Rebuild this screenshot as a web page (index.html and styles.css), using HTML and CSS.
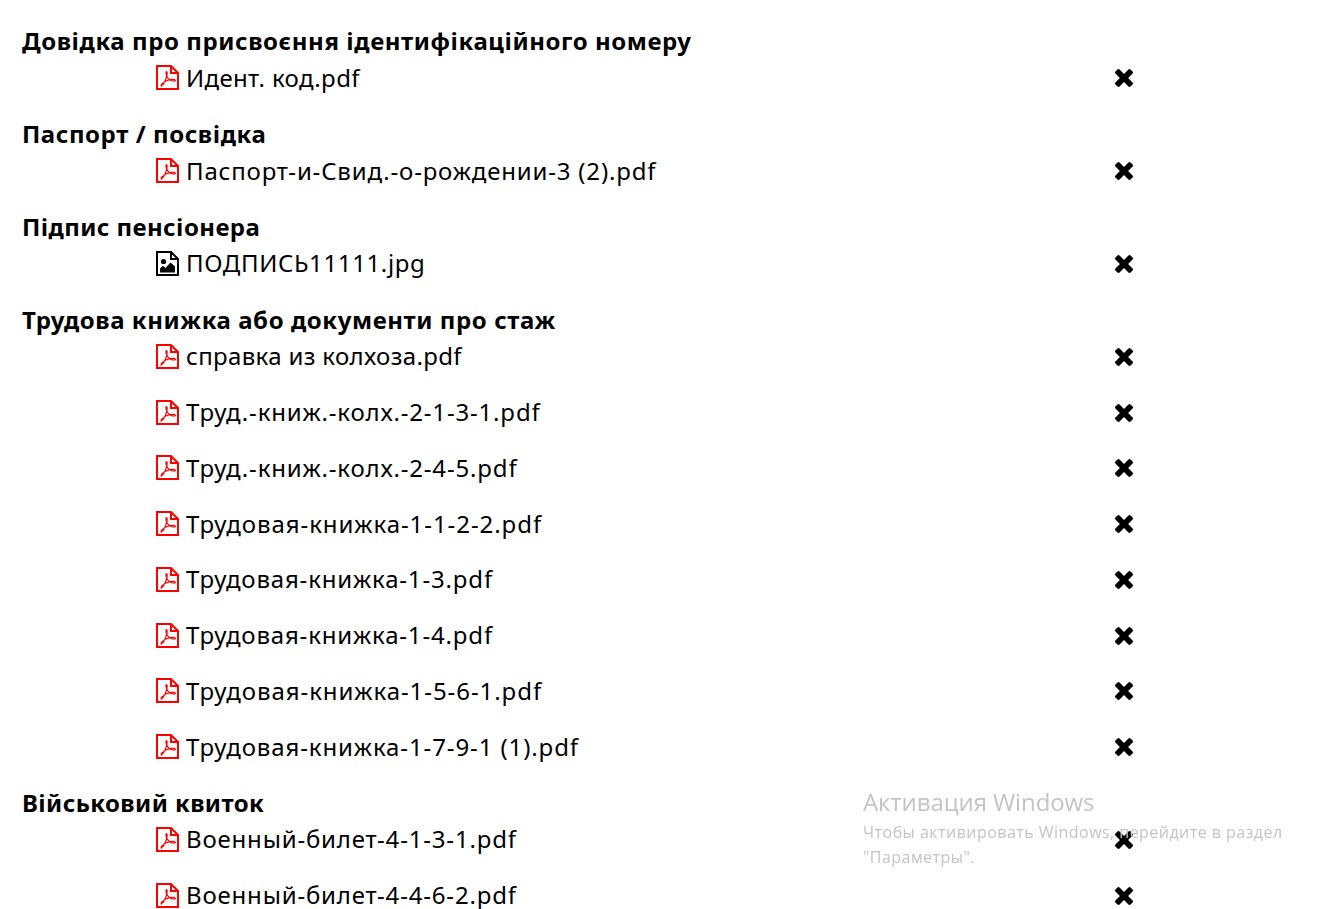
FILE: index.html
```html
<!DOCTYPE html>
<html lang="uk">
<head>
<meta charset="utf-8">
<title>Документи</title>
<link rel="stylesheet" href="styles.css">
</head>
<body>
<svg class="defs" aria-hidden="true">
<symbol id="pdf" viewBox="0 0 23 25"><path class="sheet" d="M1 1H15L22 8V24H1ZM15 1V8H22"/><path class="acro" d="M5.5 20.5c2-1 4.5-6 5.5-10.5.3-2 .2-3.5-.5-3.5s-.8 2 .2 4.5c1 2.5 3.5 4.5 6.5 5 1.5.2 2.5-.3 2-1s-2.5-.8-5-.3c-3 .5-6 2-8 4-1.2 1.2-1.5 2.5-.7 2.3z"/></symbol>
<symbol id="img" viewBox="0 0 23 25"><path class="sheet" d="M1 1H15L22 8V24H1ZM15 1V8H22"/><circle cx="7.5" cy="10.5" r="2.6"/><path d="M4 21.5V17.5L7 14.8 9.5 17 14.5 11.5 19 15.5V21.5Z"/></symbol>
<symbol id="del" viewBox="110 258 1188 1188"><path d="M1298 1214q0 40-28 68l-136 136q-28 28-68 28t-68-28l-294-294-294 294q-28 28-68 28t-68-28l-136-136q-28-28-28-68t28-68l294-294-294-294q-28-28-28-68t28-68l136-136q28-28 68-28t68 28l294 294 294-294q28-28 68-28t68 28l136 136q28 28 28 68t-28 68l-294 294 294 294q28 28 28 68z"/></symbol>
</svg>
<main class="docs">
<section class="group">
<h2 class="title">Довідка про присвоєння ідентифікаційного номеру</h2>
<div class="row"><svg class="ico pdf"><use href="#pdf"/></svg><span class="name tight">Идент. код.pdf</span><svg class="del"><use href="#del"/></svg></div>
</section>
<section class="group">
<h2 class="title">Паспорт / посвідка</h2>
<div class="row"><svg class="ico pdf"><use href="#pdf"/></svg><span class="name">Паспорт-и-Свид.-о-рождении-3 (2).pdf</span><svg class="del"><use href="#del"/></svg></div>
</section>
<section class="group">
<h2 class="title narrow">Підпис пенсіонера</h2>
<div class="row"><svg class="ico"><use href="#img"/></svg><span class="name mid">ПОДПИСЬ11111.jpg</span><svg class="del"><use href="#del"/></svg></div>
</section>
<section class="group">
<h2 class="title">Трудова книжка або документи про стаж</h2>
<div class="row"><svg class="ico pdf"><use href="#pdf"/></svg><span class="name tight">справка из колхоза.pdf</span><svg class="del"><use href="#del"/></svg></div>
<div class="row"><svg class="ico pdf"><use href="#pdf"/></svg><span class="name">Труд.-книж.-колх.-2-1-3-1.pdf</span><svg class="del"><use href="#del"/></svg></div>
<div class="row"><svg class="ico pdf"><use href="#pdf"/></svg><span class="name">Труд.-книж.-колх.-2-4-5.pdf</span><svg class="del"><use href="#del"/></svg></div>
<div class="row"><svg class="ico pdf"><use href="#pdf"/></svg><span class="name wide">Трудовая-книжка-1-1-2-2.pdf</span><svg class="del"><use href="#del"/></svg></div>
<div class="row"><svg class="ico pdf"><use href="#pdf"/></svg><span class="name">Трудовая-книжка-1-3.pdf</span><svg class="del"><use href="#del"/></svg></div>
<div class="row"><svg class="ico pdf"><use href="#pdf"/></svg><span class="name">Трудовая-книжка-1-4.pdf</span><svg class="del"><use href="#del"/></svg></div>
<div class="row"><svg class="ico pdf"><use href="#pdf"/></svg><span class="name wide">Трудовая-книжка-1-5-6-1.pdf</span><svg class="del"><use href="#del"/></svg></div>
<div class="row"><svg class="ico pdf"><use href="#pdf"/></svg><span class="name wide-long">Трудовая-книжка-1-7-9-1 (1).pdf</span><svg class="del"><use href="#del"/></svg></div>
</section>
<section class="group">
<h2 class="title narrow">Військовий квиток</h2>
<div class="row"><svg class="ico pdf"><use href="#pdf"/></svg><span class="name">Военный-билет-4-1-3-1.pdf</span><svg class="del"><use href="#del"/></svg></div>
<div class="row"><svg class="ico pdf"><use href="#pdf"/></svg><span class="name">Военный-билет-4-4-6-2.pdf</span><svg class="del"><use href="#del"/></svg></div>
</section>
</main>
<aside class="watermark">
<p class="wm-title">Активация Windows</p>
<p class="wm-text">Чтобы активировать Windows, перейдите в раздел<br>"Параметры".</p>
</aside>
</body>
</html>
```

FILE: styles.css
```css
html, body {
  margin: 0;
  height: 909px;
  overflow: hidden;
  background: #fff;
}
body {
  font-family: "Noto Sans", "Open Sans", sans-serif;
  font-size: 24px;
  line-height: 37.2px;
  color: #000;
}
.defs { display: none; }
.docs { padding: 22.4px 0 0 22px; }
.group { display: flow-root; }
.title {
  margin: 0;
  font-size: 24px;
  font-weight: 700;
  line-height: 37.2px;
  letter-spacing: 0.58px;
}
.title.narrow { letter-spacing: 0.42px; }
.row {
  display: flex;
  align-items: center;
  height: 37.2px;
  margin-bottom: 18.55px;
  padding-left: 134px;
}
.ico {
  width: 23px;
  height: 25px;
  margin-right: 7px;
  margin-bottom: 1px;
  flex: none;
  fill: #000;
  stroke: none;
}
.ico.pdf { color: #f00; fill: none; }
.sheet {
  fill: none;
  stroke: currentColor;
  stroke-width: 2;
  stroke-linejoin: miter;
}
.acro {
  fill: none;
  stroke: currentColor;
  stroke-width: 1.2;
}
.name {
  width: 929px;
  flex: none;
  padding-bottom: 2px;
  letter-spacing: 0.82px;
}
.name.tight { letter-spacing: 0.34px; }
.name.mid { letter-spacing: 0.62px; }
.name.wide { letter-spacing: 0.93px; }
.name.wide-long { letter-spacing: 0.89px; }
.del { width: 18px; height: 18px; flex: none; fill: #000; }
.watermark {
  position: fixed;
  left: 863px;
  top: 785px;
  color: #c4c4c4;
  font-family: "Open Sans", sans-serif;
}
.wm-title { margin: 0 0 1px; font-size: 24px; line-height: 34px; letter-spacing: -0.1px; }
.wm-text { margin: 0; font-size: 16px; line-height: 25px; letter-spacing: 0.46px; }
```
